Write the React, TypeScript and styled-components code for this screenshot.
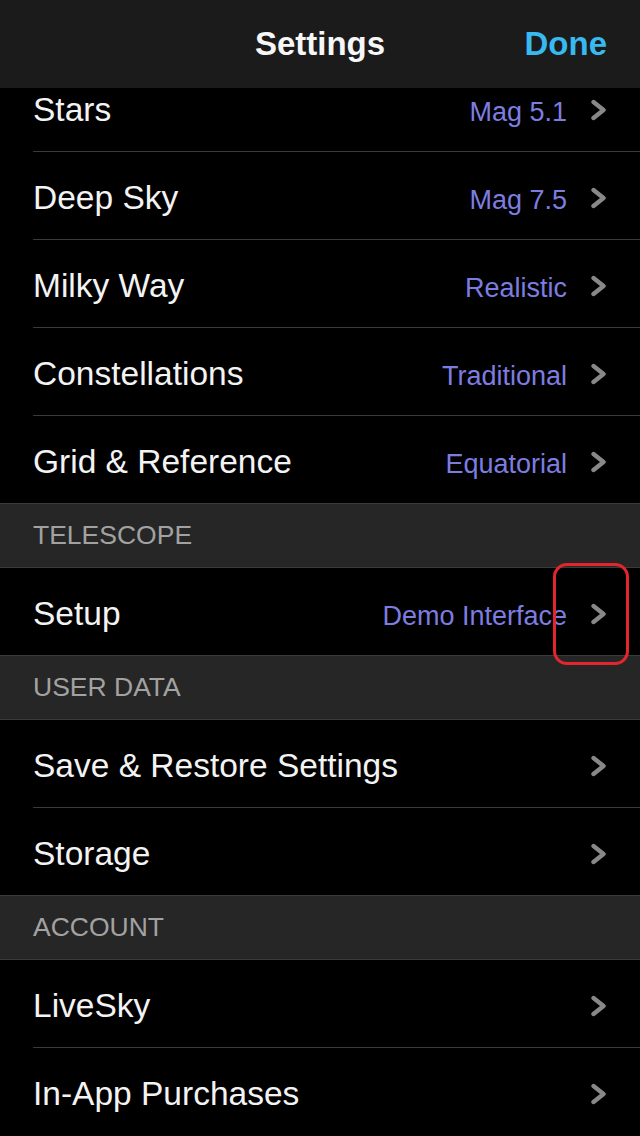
import React from "react";
import styled, { createGlobalStyle } from "styled-components";

const Global = createGlobalStyle`
  html, body { margin: 0; padding: 0; background: #000; }
  body { font-family: "Liberation Sans", Arial, sans-serif; -webkit-font-smoothing: antialiased; }
  * { box-sizing: border-box; }
`;

const Screen = styled.div`
  position: relative;
  width: 640px;
  height: 1136px;
  background: #000;
  display: flex;
  flex-direction: column;
  overflow: hidden;
`;

const NavBar = styled.header`
  position: relative;
  z-index: 2;
  flex: 0 0 88px;
  height: 88px;
  background: #1b1b1b;
  display: grid;
  grid-template-columns: 1fr auto 1fr;
  align-items: center;
  padding: 0 33px;
`;

const Title = styled.h1`
  grid-column: 2;
  margin: 0;
  font-size: 33px;
  font-weight: 700;
  color: #f7f7f7;
`;

const DoneButton = styled.span`
  grid-column: 3;
  justify-self: end;
  font-size: 33px;
  font-weight: 700;
  color: #38b9ef;
`;

const Viewport = styled.div`
  flex: 1;
  overflow: hidden;
`;

const List = styled.div`
  margin-top: -24px;
  display: flex;
  flex-direction: column;
`;

const Group = styled.section`
  display: flex;
  flex-direction: column;
`;

const SectionHeader = styled.div`
  height: 65px;
  background: #262626;
  border-top: 1px solid #3b3b3b;
  border-bottom: 1px solid #3b3b3b;
  display: flex;
  align-items: center;
  padding-left: 33px;
  font-size: 26.5px;
  color: #a2a2a2;
`;

const Row = styled.div<{ $sep: boolean }>`
  position: relative;
  height: ${(p) => (p.$sep ? 88 : 87)}px;
  padding: 0 33px ${(p) => (p.$sep ? 1 : 0)}px 33px;
  display: flex;
  align-items: center;
  &::after {
    content: "";
    display: ${(p) => (p.$sep ? "block" : "none")};
    position: absolute;
    left: 33px;
    right: 0;
    bottom: 0;
    height: 1px;
    background: #3a3a3a;
  }
`;

const Label = styled.span`
  flex: 1;
  margin-top: 4px;
  font-size: 33.5px;
  color: #f3f3f3;
`;

const Value = styled.span`
  margin-top: 9px;
  font-size: 27px;
  color: #7d7de0;
`;

const ChevronBox = styled.span`
  display: flex;
  margin-left: 23px;
  margin-top: 4px;
  width: 17px;
  justify-content: flex-end;
`;

const Annotation = styled.div`
  position: absolute;
  left: 553px;
  top: 563px;
  width: 76px;
  height: 102px;
  border: 3px solid #e3262d;
  border-radius: 14px;
  z-index: 3;
  pointer-events: none;
`;

const Chevron = () => (
  <ChevronBox>
    <svg width="17" height="22" viewBox="0 0 17 22">
      <polyline
        points="3.5,3 13.5,11 3.5,19"
        fill="none"
        stroke="#888888"
        strokeWidth="4.4"
        strokeLinecap="round"
        strokeLinejoin="round"
      />
    </svg>
  </ChevronBox>
);

type Item = { label: string; value?: string };
type Section = { title?: string; items: Item[] };

const sections: Section[] = [
  {
    items: [
      { label: "Stars", value: "Mag 5.1" },
      { label: "Deep Sky", value: "Mag 7.5" },
      { label: "Milky Way", value: "Realistic" },
      { label: "Constellations", value: "Traditional" },
      { label: "Grid & Reference", value: "Equatorial" },
    ],
  },
  { title: "TELESCOPE", items: [{ label: "Setup", value: "Demo Interface" }] },
  {
    title: "USER DATA",
    items: [{ label: "Save & Restore Settings" }, { label: "Storage" }],
  },
  {
    title: "ACCOUNT",
    items: [{ label: "LiveSky" }, { label: "In-App Purchases" }],
  },
];

export default function App() {
  return (
    <Screen>
      <Global />
      <NavBar>
        <Title>Settings</Title>
        <DoneButton>Done</DoneButton>
      </NavBar>
      <Viewport>
        <List>
          {sections.map((s, si) => (
            <Group key={si}>
              {s.title && <SectionHeader>{s.title}</SectionHeader>}
              {s.items.map((it, i) => (
                <Row key={it.label} $sep={i < s.items.length - 1}>
                  <Label>{it.label}</Label>
                  {it.value && <Value>{it.value}</Value>}
                  <Chevron />
                </Row>
              ))}
            </Group>
          ))}
        </List>
      </Viewport>
      <Annotation />
    </Screen>
  );
}
